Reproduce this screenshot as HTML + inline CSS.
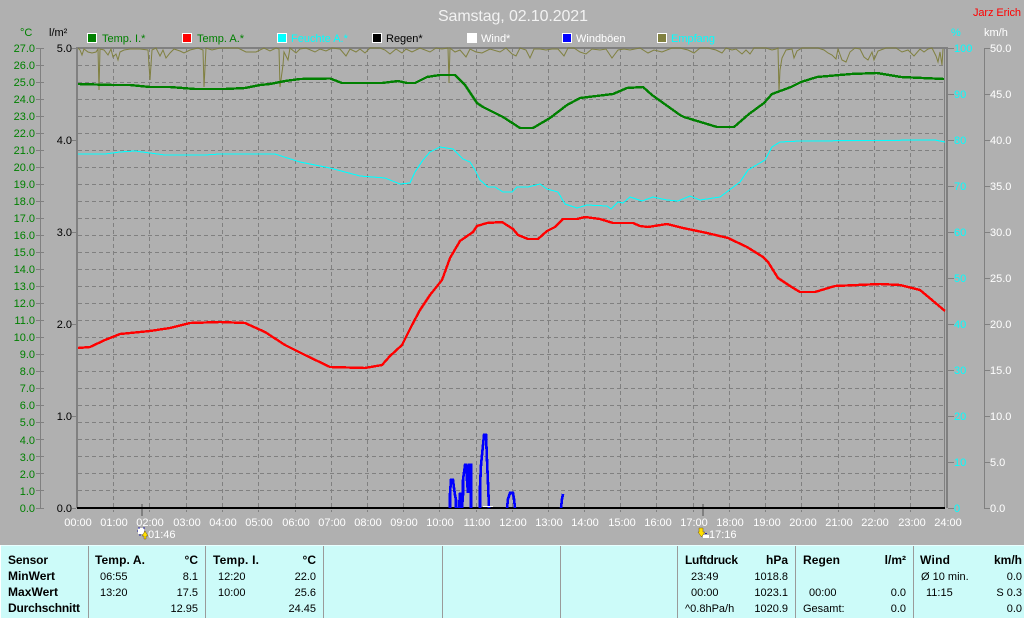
<!DOCTYPE html>
<html><head><meta charset="utf-8"><style>
html,body{margin:0;padding:0;background:#b0b0b0}
svg{display:block}
text{font-family:"Liberation Sans",sans-serif;font-size:11px}
.g{fill:#008000}.w{fill:#fff}.c{fill:#0ff}.k{fill:#000}
.e{text-anchor:end}.m{text-anchor:middle}
.b{font-weight:bold;font-size:12px}
.t{fill:#000;font-size:11px}
.cr{shape-rendering:crispEdges}
</style></head><body>
<svg width="1024" height="618" viewBox="0 0 1024 618" xmlns="http://www.w3.org/2000/svg">
<rect width="1024" height="618" fill="#b0b0b0"/>
<text x="513" y="21" class="m" fill="#f2f2f2" style="font-size:16px" textLength="150">Samstag, 02.10.2021</text>
<text x="973" y="16" fill="#f00" style="font-size:11px" textLength="48">Jarz Erich</text>
<text x="20" y="36" class="g">°C</text>
<text x="49" y="36" class="k">l/m²</text>
<text x="951" y="36" class="c">%</text>
<text x="984" y="36" class="w">km/h</text>

<!-- legend -->
<g stroke="#fff" stroke-width="1">
<rect x="87.5" y="33.5" width="9" height="9" fill="#008000"/>
<rect x="182.5" y="33.5" width="9" height="9" fill="#f00"/>
<rect x="277.5" y="33.5" width="9" height="9" fill="#0ff"/>
<rect x="372.5" y="33.5" width="9" height="9" fill="#000"/>
<rect x="467.5" y="33.5" width="9" height="9" fill="#fff"/>
<rect x="562.5" y="33.5" width="9" height="9" fill="#00f"/>
<rect x="657.5" y="33.5" width="9" height="9" fill="#808040"/>
</g>
<text x="102" y="42" class="g">Temp. I.*</text>
<text x="197" y="42" class="g">Temp. A.*</text>
<text x="291" y="42" class="c">Feuchte A.*</text>
<text x="386" y="42" class="k">Regen*</text>
<text x="481" y="42" class="w">Wind*</text>
<text x="576" y="42" class="w">Windböen</text>
<text x="671" y="42" class="c">Empfang</text>

<!-- grid -->
<g stroke="#808080" stroke-width="1" stroke-dasharray="4 3" fill="none" class="cr">
<path d="M78 65.500H945M78 82.500H945M78 99.500H945M78 116.500H945M78 133.500H945M78 150.500H945M78 167.500H945M78 184.500H945M78 201.500H945M78 218.500H945M78 235.500H945M78 252.500H945M78 269.500H945M78 286.500H945M78 303.500H945M78 320.500H945M78 337.500H945M78 354.500H945M78 371.500H945M78 388.500H945M78 405.500H945M78 422.500H945M78 439.500H945M78 456.500H945M78 473.500H945M78 490.500H945"/>
<path d="M113.500 48V512M149.500 48V512M186.500 48V512M222.500 48V512M258.500 48V512M295.500 48V512M331.500 48V512M367.500 48V512M403.500 48V512M439.500 48V512M476.500 48V512M512.500 48V512M548.500 48V512M584.500 48V512M620.500 48V512M656.500 48V512M693.500 48V512M729.500 48V512M765.500 48V512M801.500 48V512M838.500 48V512M874.500 48V512M910.500 48V512"/>
</g>

<!-- frame and axes -->
<g fill="#808080">
<rect x="76" y="47" width="871" height="2"/>
<rect x="76" y="47" width="2" height="461"/>
<rect x="944" y="47" width="1" height="461"/>
<rect x="946" y="47" width="2" height="461"/>
<rect x="40" y="48" width="1" height="461"/>
<rect x="984" y="48" width="1" height="461"/>
<rect x="141" y="504" width="2" height="12"/>
<rect x="702" y="504" width="2" height="12"/>
</g>
<path d="M36 48.500H44M36 65.500H44M36 82.500H44M36 99.500H44M36 116.500H44M36 133.500H44M36 150.500H44M36 167.500H44M36 184.500H44M36 201.500H44M36 218.500H44M36 235.500H44M36 252.500H44M36 269.500H44M36 286.500H44M36 303.500H44M36 320.500H44M36 337.500H44M36 354.500H44M36 371.500H44M36 388.500H44M36 405.500H44M36 422.500H44M36 439.500H44M36 456.500H44M36 473.500H44M36 490.500H44M36 508.500H44" stroke="#808080" fill="none"/>
<path d="M948 48.500H954M948 94.500H954M948 140.500H954M948 186.500H954M948 232.500H954M948 278.500H954M948 324.500H954M948 370.500H954M948 416.500H954M948 462.500H954M948 508.500H954M984 48.500H990M984 94.500H990M984 140.500H990M984 186.500H990M984 232.500H990M984 278.500H990M984 324.500H990M984 370.500H990M984 416.500H990M984 462.500H990M984 508.500H990" stroke="#808080" fill="none"/>
<path d="M72 48.500H76M72 140.500H76M72 232.500H76M72 324.500H76M72 416.500H76M72 508.500H76" stroke="#808080" fill="none"/>

<!-- left temp labels -->
<g class="g" text-anchor="end">
<text x="35" y="52">27.0</text><text x="35" y="69">26.0</text><text x="35" y="86">25.0</text><text x="35" y="103">24.0</text><text x="35" y="120">23.0</text><text x="35" y="137">22.0</text><text x="35" y="154">21.0</text><text x="35" y="171">20.0</text><text x="35" y="188">19.0</text><text x="35" y="205">18.0</text><text x="35" y="222">17.0</text><text x="35" y="239">16.0</text><text x="35" y="256">15.0</text><text x="35" y="273">14.0</text><text x="35" y="290">13.0</text><text x="35" y="307">12.0</text><text x="35" y="324">11.0</text><text x="35" y="341">10.0</text><text x="35" y="358">9.0</text><text x="35" y="375">8.0</text><text x="35" y="392">7.0</text><text x="35" y="409">6.0</text><text x="35" y="426">5.0</text><text x="35" y="444">4.0</text><text x="35" y="461">3.0</text><text x="35" y="478">2.0</text><text x="35" y="495">1.0</text><text x="35" y="512">0.0</text>
</g>
<g class="k" text-anchor="end">
<text x="72" y="52">5.0</text><text x="72" y="144">4.0</text><text x="72" y="236">3.0</text><text x="72" y="328">2.0</text><text x="72" y="420">1.0</text><text x="72" y="512">0.0</text>
</g>
<g class="c">
<text x="954" y="52">100</text><text x="954" y="98">90</text><text x="954" y="144">80</text><text x="954" y="190">70</text><text x="954" y="236">60</text><text x="954" y="282">50</text><text x="954" y="328">40</text><text x="954" y="374">30</text><text x="954" y="420">20</text><text x="954" y="466">10</text><text x="954" y="512">0</text>
</g>
<g class="w">
<text x="990" y="52">50.0</text><text x="990" y="98">45.0</text><text x="990" y="144">40.0</text><text x="990" y="190">35.0</text><text x="990" y="236">30.0</text><text x="990" y="282">25.0</text><text x="990" y="328">20.0</text><text x="990" y="374">15.0</text><text x="990" y="420">10.0</text><text x="990" y="466">5.0</text><text x="990" y="512">0.0</text>
</g>

<!-- baseline -->
<rect x="77" y="507" width="868" height="2" fill="#000"/>

<!-- cyan humidity -->
<polyline class="cr" fill="none" stroke="#0ff" stroke-width="1" points="78,154 105,154 120,152 135,151 150,153 165,155 205,155 220,154 275,154 300,162 330,168 360,176 385,178 400,184 410,183 415,172 423,160 430,152 440,147 453,149 463,159 470,162 475,170 480,180 488,187 495,187 503,192 512,192 517,187 528,187 540,184 547,189 558,192 565,204 577,208 587,205 607,206 611,209 618,202 623,203 630,197 642,201 653,197 667,200 678,201 690,196 700,200 720,197 740,182 748,170 765,160 772,147 780,142 800,141 935,140 945,142"/>
<polyline fill="none" stroke="#0ff" stroke-width="1" opacity=".6" points="78,154 105,154 120,152 135,151 150,153 165,155 205,155 220,154 275,154 300,162 330,168 360,176 385,178 400,184 410,183 415,172 423,160 430,152 440,147 453,149 463,159 470,162 475,170 480,180 488,187 495,187 503,192 512,192 517,187 528,187 540,184 547,189 558,192 565,204 577,208 587,205 607,206 611,209 618,202 623,203 630,197 642,201 653,197 667,200 678,201 690,196 700,200 720,197 740,182 748,170 765,160 772,147 780,142 800,141 935,140 945,142"/>

<!-- olive signal -->
<polyline fill="none" stroke="#808040" stroke-width="1" points="78,48 80,50 82,55 84,49 88,52 92,53 96,52 98,49 99,90 100,49 104,50 108,55 111,49 113,57 116,54 118,60 120,52 124,50 130,49 140,49 148,50 150,80 152,50 156,48 160,56 163,50 166,58 170,53 174,49 180,51 184,53 190,50 198,48 203,50 204,87 206,48 212,50 220,48 238,48 246,52 256,52 264,48 270,51 276,48 279,49 280,87 283,65 284,52 288,60 290,48 296,53 300,49 306,48 315,52 320,49 326,51 332,48 340,49 346,56 350,49 356,52 360,49 365,53 370,48 380,48 385,50 390,54 396,49 402,53 406,49 412,52 420,48 430,52 436,48 442,49 448,48 449,83 450,48 455,52 460,50 466,57 470,49 476,52 482,53 490,49 500,52 506,48 512,54 516,56 520,48 526,50 530,58 534,49 540,49 546,50 552,49 558,49 564,56 568,48 574,48 580,52 586,54 592,49 600,50 606,49 612,58 618,50 624,49 630,50 640,48 648,53 654,50 662,52 672,48 680,48 688,50 694,53 700,48 708,48 716,50 722,53 726,48 732,50 736,49 742,54 746,50 750,54 754,48 766,48 772,50 776,49 778,48 779,92 780,70 782,58 786,50 792,49 794,58 797,51 802,48 810,48 818,48 824,50 828,53 832,55 836,59 838,49 842,60 846,62 850,52 855,48 860,49 864,57 868,60 872,52 874,60 878,51 886,48 896,48 902,52 908,50 914,56 920,49 924,52 928,49 932,48 936,56 938,62 940,52 942,65 943,49"/>

<!-- green inside temp -->
<polyline class="cr" fill="none" stroke="#008000" stroke-width="2.400" points="78,84 113,85 130,85 150,87 170,87 195,89 225,89 245,88 260,85 270,84 285,81 300,79 330,78.500 342,83 382,83 398,81 407,83 415,83 427,77 440,75 455,75 465,85 477,103 483,107 503,117 520,128 533,128 550,118 567,105 580,98 613,94 627,88 643,87 652,95 680,115 684,117 717,127 734,127 749,114 764,103 772,94 791,87 801,82 817,77 851,74 877,73 901,77 944,79"/>

<!-- red outside temp -->
<polyline class="cr" fill="none" stroke="#f00" stroke-width="2.400" points="78,348 90,347 105,340 120,334 150,331 170,328 190,323 220,322 245,323 265,332 285,345 305,355 330,367 365,368 382,365 390,356 402,345 412,325 420,310 430,295 442,280 450,258 460,241 473,232 477,226 487,223 502,222 513,229 518,235 528,239 538,239 547,231 555,227 563,219 577,219 585,217 600,219 613,223 633,223 640,226 648,227 667,224 683,228 707,233 728,238 747,247 763,257 768,262 778,278 790,286 800,292 815,292 835,286 880,284 900,285 920,290 932,300 945,311"/>

<!-- blue gusts -->
<g class="cr" fill="none" stroke="#00f" stroke-width="2.600">
<polyline points="450,508 450,494 451,480 453,480 454,488 455,495 456,500 456,508"/>
<polyline points="459,508 460,494 461,494 462,508 463,495 463,480 465,465 466,465 467,480 468,493 469,480 469,465 471,465 471,490 471,508"/>
<polyline points="480,508 480,487 481,465 482,455 483,445 484,435 486,435 487,460 488,483 489,508"/>
<polyline points="507,508 508,499 510,493 513,493 514,499 515,508"/>
<polyline points="561,508 562,499 563,494"/>
</g>
<rect x="483" y="506" width="10" height="1" fill="#fff"/>

<!-- time labels -->
<g class="w m" text-anchor="middle">
<text x="78" y="526">00:00</text><text x="114" y="526">01:00</text><text x="150" y="526">02:00</text><text x="187" y="526">03:00</text><text x="223" y="526">04:00</text><text x="259" y="526">05:00</text><text x="296" y="526">06:00</text><text x="332" y="526">07:00</text><text x="368" y="526">08:00</text><text x="404" y="526">09:00</text><text x="440" y="526">10:00</text><text x="477" y="526">11:00</text><text x="513" y="526">12:00</text><text x="549" y="526">13:00</text><text x="585" y="526">14:00</text><text x="622" y="526">15:00</text><text x="658" y="526">16:00</text><text x="694" y="526">17:00</text><text x="730" y="526">18:00</text><text x="767" y="526">19:00</text><text x="803" y="526">20:00</text><text x="839" y="526">21:00</text><text x="875" y="526">22:00</text><text x="912" y="526">23:00</text><text x="948" y="526">24:00</text>
</g>

<!-- sun icons -->
<rect x="138" y="528" width="6" height="6" fill="#fff"/>
<path d="M138 528h2M143 528h2M137 531h1M144 532h1M139 535h2" stroke="#2020a0" stroke-width="1" fill="none"/>
<path d="M145 531l3 5h-2v3h-2v-3h-2z" fill="#ffe000" stroke="#604000" stroke-width=".4"/>
<text x="148" y="538" class="w">01:46</text>
<path d="M699 528h4v4h2l-3.500 5-3.500-5h1z" fill="#ffe000" stroke="#604000" stroke-width=".4"/>
<rect x="703" y="535" width="6" height="3" fill="#fff"/>
<rect x="705" y="533" width="2" height="1" fill="#2020a0"/>
<text x="709" y="538" class="w">17:16</text>

<!-- panel -->
<rect x="0" y="545" width="1024" height="73" fill="#ccfbf9"/>
<rect x="0" y="545" width="1024" height="1" fill="#e8ffff"/>
<rect x="0" y="545" width="1" height="73" fill="#fff"/>
<g fill="#9a9a9a">
<rect x="88" y="546" width="1" height="72"/><rect x="205" y="546" width="1" height="72"/><rect x="323" y="546" width="1" height="72"/><rect x="442" y="546" width="1" height="72"/><rect x="560" y="546" width="1" height="72"/><rect x="677" y="546" width="1" height="72"/><rect x="795" y="546" width="1" height="72"/><rect x="913" y="546" width="1" height="72"/>
</g>
<g class="t">
<text x="8" y="564" class="b" textLength="40">Sensor</text>
<text x="8" y="580" class="b" textLength="47">MinWert</text>
<text x="8" y="596" class="b" textLength="50">MaxWert</text>
<text x="8" y="612" class="b" textLength="72">Durchschnitt</text>

<text x="95" y="564" class="b" textLength="50">Temp. A.</text>
<text x="198" y="564" class="b e">°C</text>
<text x="100" y="580">06:55</text><text x="198" y="580" class="e">8.1</text>
<text x="100" y="596">13:20</text><text x="198" y="596" class="e">17.5</text>
<text x="198" y="612" class="e">12.95</text>

<text x="213" y="564" class="b" textLength="46">Temp. I.</text>
<text x="316" y="564" class="b e">°C</text>
<text x="218" y="580">12:20</text><text x="316" y="580" class="e">22.0</text>
<text x="218" y="596">10:00</text><text x="316" y="596" class="e">25.6</text>
<text x="316" y="612" class="e">24.45</text>

<text x="685" y="564" class="b" textLength="53">Luftdruck</text>
<text x="788" y="564" class="b e">hPa</text>
<text x="691" y="580">23:49</text><text x="788" y="580" class="e">1018.8</text>
<text x="691" y="596">00:00</text><text x="788" y="596" class="e">1023.1</text>
<text x="685" y="612">^0.8hPa/h</text><text x="788" y="612" class="e">1020.9</text>

<text x="803" y="564" class="b" textLength="37">Regen</text>
<text x="906" y="564" class="b e">l/m²</text>
<text x="809" y="596">00:00</text><text x="906" y="596" class="e">0.0</text>
<text x="803" y="612">Gesamt:</text><text x="906" y="612" class="e">0.0</text>

<text x="920" y="564" class="b" textLength="30">Wind</text>
<text x="1022" y="564" class="b e">km/h</text>
<text x="921" y="580">Ø 10 min.</text><text x="1022" y="580" class="e">0.0</text>
<text x="926" y="596">11:15</text><text x="1022" y="596" class="e">S 0.3</text>
<text x="1022" y="612" class="e">0.0</text>
</g>
</svg>
</body></html>
